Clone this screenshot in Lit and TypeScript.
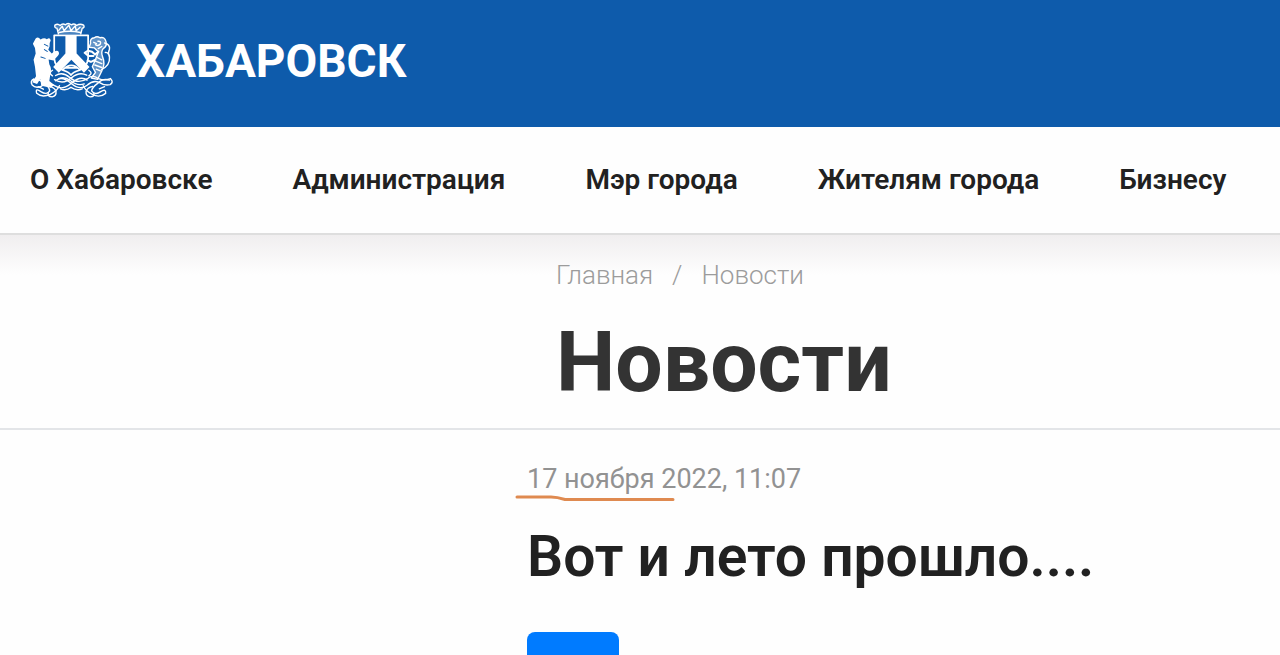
import { LitElement, html, css, svg } from "lit";
import { customElement } from "lit/decorators.js";

const emblem = svg`
  <g fill="none" stroke="#fff" stroke-width="5" stroke-linecap="round" stroke-linejoin="round">
    <path d="M116 56 L112 40 Q104 39 106 31 Q114 25 121 32 Q128 24 136 30 Q143 22 153 30 Q162 24 168 32 Q178 25 188 31 Q192 39 184 40 L180 56" fill="#fff" fill-opacity=".25" stroke-width="4"/>
    <path d="M117 46 L127 34 L132 47 L146 31 L152 47 L164 33 L167 47 L178 37 M118 52 Q148 45 179 52" stroke-width="4"/>
    <path d="M104 60 H201 V126 Q198 151 176 160 Q157 165 152 174 Q147 165 129 160 Q106 150 104 126 Z"/>
    <path d="M129 158 Q142 146 153 146 Q164 146 177 158 M136 153 H170"/>
  </g>
  <path d="M136 61 H168 V112 L205 151 L189 167 L153 130 L117 167 L101 151 L136 112 Z" fill="#fff"/>
  <path d="M51 69 Q58 62 65 72 Q75 66 83 71 Q92 64 94 75 Q89 83 91 91 L87 101 L97 112 Q105 102 115 105 Q121 112 114 119 L102 132 L88 129 L90 143 Q98 157 93 171 L90 191 L104 202 L94 210 L67 204 L64 185 L55 199 L41 194 L52 177 L49 150 L45 130 L51 112 L49 96 L43 84 Z" fill="#fff"/>
  <path d="M76 86 L86 91 M76 101 L84 106 M66 122 L78 126" fill="none" stroke="#0e5bab" stroke-width="3" stroke-linecap="round"/>
  <g fill="none" stroke="#fff" stroke-width="4" stroke-linecap="round" stroke-linejoin="round">
    <path d="M208 83 Q205 68 219 67 Q226 61 235 67 Q248 63 252 78 Q256 91 244 98 Q237 107 242 121 Q251 141 240 162 L228 186 L210 182 L222 166 L213 150 L222 130 L230 107 L219 96 L204 94 Z" fill="#fff" fill-opacity=".35"/>
    <path d="M230 107 L221 115 L212 107 L201 104 L191 110 L202 119 L216 119 M222 130 L209 136 L200 132" stroke-width="6"/>
    <path d="M217 80 L225 84 M229 77 Q239 76 236 85 Q230 92 222 87 M230 98 L240 92 M226 123 L240 130 M222 134 L240 141 M220 145 L240 152 M224 157 L236 162"/>
    <path d="M239 158 Q264 146 262 123 Q259 108 250 109 M248 82 Q264 86 262 100 Q257 109 262 120"/>
  </g>
  <g fill="none" stroke="#fff" stroke-width="4" stroke-linecap="round">
    <path d="M108 175 Q128 163 149 181 Q171 201 199 184 Q213 171 230 184 Q250 191 265 184 Q275 194 264 201 Q247 205 231 194 Q214 188 198 203 Q177 219 152 197 Q125 174 108 190"/>
    <path d="M197 174 Q176 163 154 181 Q131 203 105 187 M198 188 Q179 174 152 198 Q128 219 105 204 Q88 193 68 205 Q51 213 41 202 Q34 190 46 185"/>
    <path d="M43 188 Q61 183 72 195 Q91 207 91 219 Q83 232 66 221 Q49 209 54 226 Q68 239 93 229 Q113 218 119 204"/>
    <path d="M262 188 Q242 183 230 196 Q211 210 211 219 Q221 233 237 221 Q253 211 251 226 Q234 240 213 229 Q193 218 187 204"/>
    <path d="M88 206 Q105 208 109 220 Q111 233 98 236 Q84 235 87 225 M214 206 Q198 209 195 221 Q194 234 207 236 Q221 235 217 225"/>
    <path d="M117 184 Q134 177 151 190 Q170 206 190 199 M122 213 Q137 220 152 209 Q168 220 184 213 M99 160 Q86 168 99 176 M203 160 Q216 168 203 176 M58 207 L73 214 M233 213 L248 207"/>
  </g>
`;

const sections = ["О Хабаровске", "Администрация", "Мэр города", "Жителям города", "Бизнесу"];

@customElement("app-root")
export class AppRoot extends LitElement {
  static styles = css`
    :host {
      display: block;
      height: 100vh;
      overflow: hidden;
      background: #fefefe;
      color: #212121;
      font-family: Roboto, "Liberation Sans", sans-serif;
    }
    a {
      color: inherit;
      text-decoration: none;
    }
    .header {
      background: #0e5bab;
      color: #fff;
      padding: 22px 29px 27px;
    }
    .brand {
      display: flex;
      align-items: center;
      gap: 23px;
      font-size: 46px;
      font-weight: 700;
      line-height: 78px;
    }
    .emblem {
      display: block;
      width: 84px;
      height: 78px;
    }
    .nav {
      display: flex;
      gap: 80px;
      padding: 36px 30px;
      border-bottom: 2px solid #dedede;
      font-size: 28px;
      font-weight: 600;
      line-height: 34px;
      white-space: nowrap;
    }
    .intro {
      padding: 24px 28px 21px 556px;
      border-bottom: 2px solid #e3e5e8;
      background: linear-gradient(#f0eeef, #fefefe 40px);
    }
    .crumbs {
      display: flex;
      gap: 19px;
      color: #9c9c9c;
      font-size: 26px;
      font-weight: 300;
      line-height: 32px;
    }
    .heading {
      margin: 28px 0 0;
      color: #333;
      font-size: 84px;
      font-weight: 700;
      line-height: 88px;
    }
    .article {
      padding: 32px 28px 0 527px;
    }
    .date {
      position: relative;
      display: inline-block;
      color: #929292;
      font-size: 27px;
      line-height: 34px;
    }
    .mark {
      position: absolute;
      left: -12px;
      bottom: -6px;
      width: 161px;
      height: 8px;
    }
    .title {
      margin: 27px 0 41px;
      font-size: 57px;
      font-weight: 600;
      line-height: 68px;
    }
    .action {
      display: block;
      width: 92px;
      height: 56px;
      border: 0;
      border-radius: 8px;
      background: #007bff;
    }
  `;

  render() {
    return html`
      <header class="header">
        <a class="brand" href="#">
          <svg class="emblem" viewBox="32 22 240 223" aria-hidden="true">${emblem}</svg>
          <span>ХАБАРОВСК</span>
        </a>
      </header>
      <nav class="nav">${sections.map((name) => html`<a href="#">${name}</a>`)}</nav>
      <section class="intro">
        <div class="crumbs"><a href="#">Главная</a><span>/</span><a href="#">Новости</a></div>
        <h1 class="heading">Новости</h1>
      </section>
      <main class="article">
        <time class="date" datetime="2022-11-17T11:07">17 ноября 2022, 11:07<svg class="mark" viewBox="0 0 161 8" aria-hidden="true"><path d="M2 3 H36 Q42 3 50 5.500 H158" fill="none" stroke="#df8a50" stroke-width="3" stroke-linecap="round"/></svg></time>
        <h2 class="title">Вот и лето прошло....</h2>
        <button class="action" type="button"></button>
      </main>
    `;
  }
}
